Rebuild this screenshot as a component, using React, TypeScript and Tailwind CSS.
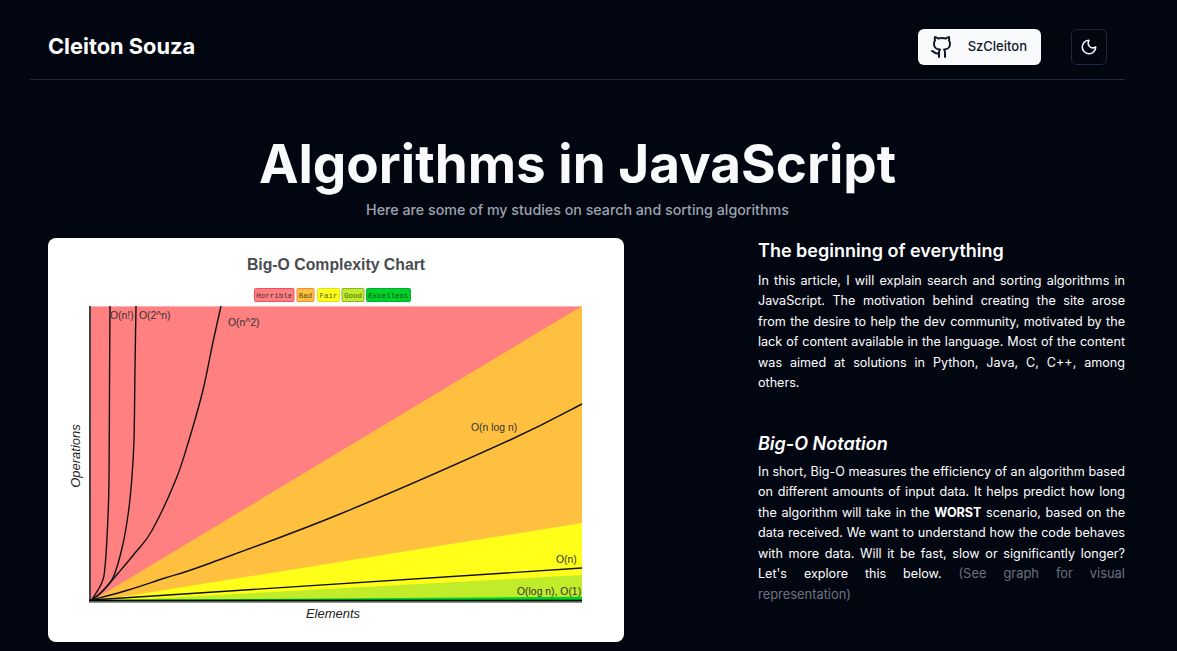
import { Github, Moon } from "lucide-react";

const legend = [
  { label: "Horrible", x: 206.5, w: 39.5, fill: "#ff8080", stroke: "#f0525c", color: "#4a2a38" },
  { label: "Bad", x: 249, w: 17, fill: "#ffc040", stroke: "#f58a3a", color: "#5a4a18" },
  { label: "Fair", x: 269.5, w: 22, fill: "#ffff1a", stroke: "#e0e020", color: "#5a5a10" },
  { label: "Good", x: 294, w: 22, fill: "#c0ec2a", stroke: "#8fb030", color: "#4a5a10" },
  { label: "Excellent", x: 318.5, w: 44, fill: "#00d02a", stroke: "#00b030", color: "#044a16" },
];

const curves: [number, number][][] = [
  [[43.7, 362], [53.7, 345], [57, 329], [59.7, 285], [61, 242], [61.5, 150], [62, 68]],
  [[43.7, 362], [53.7, 354], [65.3, 339], [74.3, 309], [80.3, 275], [83.7, 242], [86, 202], [87, 130], [88, 68]],
  [[43.7, 362], [53.7, 354], [70.3, 335], [87, 315], [103.7, 293], [127.7, 242], [141, 202], [155, 152], [165, 104], [173, 68]],
  [[43.7, 362], [80.3, 352], [117, 340], [157, 327], [292, 276], [462, 202], [534, 166]],
];

// catmull-rom through the measured points
function smooth(pts: [number, number][]) {
  let d = `M${pts[0][0]} ${pts[0][1]}`;
  for (let i = 0; i < pts.length - 1; i++) {
    const p0 = pts[Math.max(i - 1, 0)];
    const p1 = pts[i];
    const p2 = pts[i + 1];
    const p3 = pts[Math.min(i + 2, pts.length - 1)];
    const c1x = p1[0] + (p2[0] - p0[0]) / 6;
    const c1y = p1[1] + (p2[1] - p0[1]) / 6;
    const c2x = p2[0] - (p3[0] - p1[0]) / 6;
    const c2y = p2[1] - (p3[1] - p1[1]) / 6;
    d += ` C${c1x} ${c1y} ${c2x} ${c2y} ${p2[0]} ${p2[1]}`;
  }
  return d;
}

function ComplexityChart() {
  return (
    <svg viewBox="0 0 576 404" className="block w-full h-full" style={{ fontFamily: "'Liberation Sans', Arial, sans-serif" }}>
      <text x="288" y="32" textAnchor="middle" fontSize="15.8" fontWeight="700" fill="#484c50">
        Big-O Complexity Chart
      </text>

      {legend.map((item) => (
        <g key={item.label}>
          <rect x={item.x} y="50.5" width={item.w} height="13" rx="1" fill={item.fill} stroke={item.stroke} strokeWidth="1" />
          <text x={item.x + item.w / 2} y="60" textAnchor="middle" fontSize="7.5" fill={item.color} style={{ fontFamily: "'Liberation Mono', monospace" }}>
            {item.label}
          </text>
        </g>
      ))}

      {/* areas */}
      <rect x="42" y="68" width="492" height="296" fill="#ff8080" />
      <rect x="42" y="68" width="492" height="1" fill="#ffb0b0" />
      <polygon points="42,364 534,68 534,364" fill="#ffc03f" />
      <polygon points="42,364 534,285 534,364" fill="#ffff1a" />
      <polygon points="42,364 534,337 534,364" fill="#c0ec2a" />
      <polygon points="42,362 534,358.7 534,364 42,364" fill="#00d02a" />

      {/* curves */}
      <g fill="none" stroke="#111" strokeWidth="1.4">
        {curves.map((pts, i) => (
          <path key={i} d={smooth(pts)} />
        ))}
        <path d="M43.7 362 L534 330" />
      </g>
      <rect x="41" y="68" width="2" height="296" fill="#444" />
      <rect x="41" y="361.7" width="493" height="1.7" fill="#000" />
      <rect x="41" y="363.4" width="493" height="1.3" fill="#666" />

      <g fontSize="10.4" fill="#333">
        <text x="62" y="81">O(n!)</text>
        <text x="91" y="81">O(2^n)</text>
        <text x="180" y="88">O(n^2)</text>
        <text x="423" y="193">O(n log n)</text>
        <text x="508" y="325">O(n)</text>
        <text x="469" y="357">O(log n), O(1)</text>
      </g>

      <text x="285" y="379.5" textAnchor="middle" fontSize="13" fontStyle="italic" fill="#222">
        Elements
      </text>
      <text transform="translate(32 218) rotate(-90)" textAnchor="middle" fontSize="13" fontStyle="italic" fill="#222">
        Operations
      </text>
    </svg>
  );
}

export default function App() {
  return (
    <div className="min-h-screen bg-[#020611] text-[#f8fafc] font-['Inter',sans-serif] overflow-hidden">
      <div className="ml-[30px] w-[1095px]">
        <header className="flex items-center justify-between h-[80px] pt-[14px] px-[18px] border-b border-[#1e293b]">
          <h2 className="text-[21.8px] font-bold text-white">Cleiton Souza</h2>
          <div className="flex items-center gap-[30px]">
            <button className="flex items-center justify-between w-[123px] h-9 pl-[12px] pr-[14px] rounded-md bg-[#f8fafc] text-[#0f172a] text-[13px] font-medium">
              <Github size={24} />
              SzCleiton
            </button>
            <button className="flex items-center justify-center w-9 h-9 rounded-md border border-[#1e293b]">
              <Moon size={18} />
            </button>
          </div>
        </header>

        <main className="pl-[18px]">
          <div className="flex flex-col items-center pt-[48px] pr-[18px]">
            <h1 className="text-[53px] leading-[72px] font-bold text-[#f8fafc]">Algorithms in JavaScript</h1>
            <p className="text-[14.25px] leading-5 font-medium text-[#9ca3af]">Here are some of my studies on search and sorting algorithms</p>
          </div>

          <div className="flex justify-between mt-[18px]">
            <div className="w-[576px] h-[404px] bg-white rounded-lg overflow-hidden">
              <ComplexityChart />
            </div>

            <div className="w-[367px] text-[12.6px] leading-[20.48px] text-justify text-white">
              <h3 className="text-[18px] leading-6 font-semibold mt-px mb-[8px] text-left">The beginning of everything</h3>
              <p>
                In this article, I will explain search and sorting algorithms in JavaScript. The motivation behind creating the site arose from the desire to help the dev community, motivated by the lack of content available in the language. Most of the content was aimed at solutions in Python, Java, C, C++, among others.
              </p>

              <h3 className="text-[18px] leading-6 font-semibold italic mt-[38px] mb-[6px] text-left">Big-O Notation</h3>
              <p>
                In short, Big-O measures the efficiency of an algorithm based on different amounts of input data. It helps predict how long the algorithm will take in the <strong className="font-bold">WORST</strong> scenario, based on the data received. We want to understand how the code behaves with more data. Will it be fast, slow or significantly longer? Let's explore this below. <span className="text-[12.9px] text-[#6b7280]">(See graph for visual representation)</span>
              </p>
            </div>
          </div>
        </main>
      </div>
    </div>
  );
}
